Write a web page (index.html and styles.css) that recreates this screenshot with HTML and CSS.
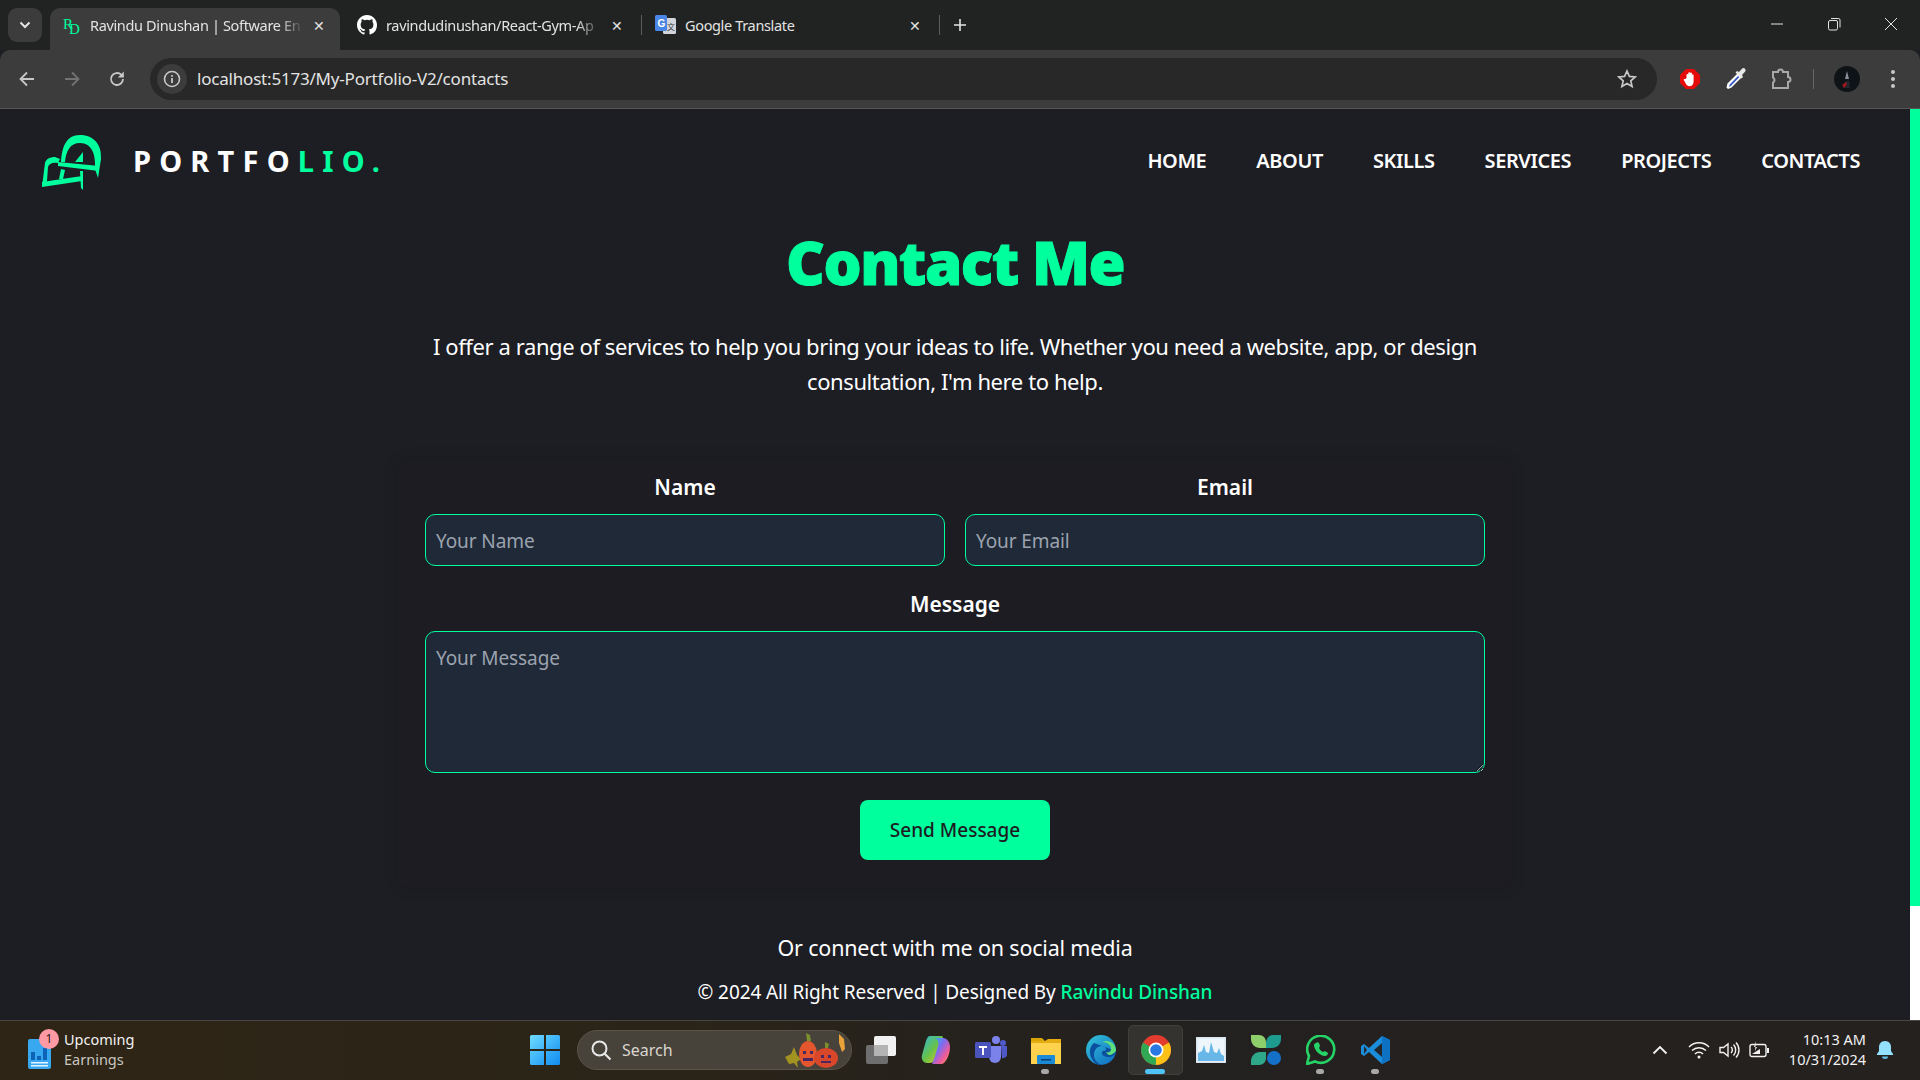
FILE: index.html
```html
<!DOCTYPE html>
<html lang="en">
 <head>
  <meta charset="utf-8"/>
  <title>Ravindu Dinushan | Software Engineer</title>
  <link rel="stylesheet" href="styles.css">
 </head>
 <body>
  <!-- browser tabs -->
  <div class="tabstrip">
   <button class="tab-search"><svg width="12" height="8" viewBox="0 0 12 8"><path d="M1.500 1.500 6 6l4.500-4.500" fill="none" stroke="#e3e3e3" stroke-width="2"/></svg></button>
   <div class="tab tab-active">
    <svg class="favicon" width="18" height="22" viewBox="0 0 18 22"><text x="0" y="15" class="fav-r">R</text><text x="6" y="20" class="fav-r">D</text></svg>
    <span class="tab-title">Ravindu Dinushan | Software En</span>
    <span class="tab-close">✕</span>
   </div>
   <div class="tab tab-gh">
    <svg class="favicon" width="20" height="20" viewBox="0 0 16 16"><path fill="#fff" d="M8 0C3.580 0 0 3.580 0 8c0 3.540 2.290 6.530 5.470 7.590.4.070.55-.17.55-.38v-1.340c-2.230.48-2.690-1.070-2.690-1.070-.36-.93-.89-1.170-.89-1.170-.73-.5.060-.49.060-.49.8.060 1.230.83 1.230.83.71 1.220 1.870.87 2.330.66.070-.52.28-.87.51-1.070-1.780-.2-3.640-.89-3.640-3.950 0-.87.31-1.590.82-2.150-.08-.2-.36-1.020.08-2.120 0 0 .67-.21 2.200.82a7.600 7.600 0 0 1 4 0c1.530-1.040 2.200-.82 2.200-.82.44 1.100.16 1.920.08 2.120.51.56.82 1.270.82 2.150 0 3.070-1.870 3.750-3.650 3.950.29.25.54.73.54 1.480v2.200c0 .21.15.46.55.38A8 8 0 0 0 16 8c0-4.420-3.580-8-8-8z"/></svg>
    <span class="tab-title">ravindudinushan/React-Gym-Ap</span>
    <span class="tab-close">✕</span>
   </div>
   <i class="tab-sep"></i>
   <div class="tab tab-plain">
    <svg class="favicon" width="21" height="21" viewBox="0 0 21 21"><rect x="8" y="3" width="13" height="16" rx="1.500" fill="#d2d6dc"/><rect x="0" y="0" width="12" height="16" rx="1.500" fill="#4a86e8"/><text x="2.500" y="12" class="fav-g">G</text><text x="12" y="15" class="fav-t">文</text></svg>
    <span class="tab-title">Google Translate</span>
    <span class="tab-close">✕</span>
   </div>
   <i class="tab-sep"></i>
   <svg class="new-tab" width="14" height="14" viewBox="0 0 14 14"><path d="M7 1v12M1 7h12" stroke="#e3e3e3" stroke-width="1.600"/></svg>
   <div class="window-btns">
    <svg width="14" height="14" viewBox="0 0 14 14"><path d="M1 7h12" stroke="#e3e3e3" stroke-width="1"/></svg>
    <svg width="14" height="14" viewBox="0 0 14 14"><rect x="1.500" y="3.500" width="9" height="9.500" rx="1.500" fill="none" stroke="#e3e3e3"/><path d="M4 1.500h7.500a1.500 1.500 0 0 1 1.500 1.500v7.500" fill="none" stroke="#e3e3e3"/></svg>
    <svg width="14" height="14" viewBox="0 0 14 14"><path d="M1 1l12 12M13 1 1 13" stroke="#e3e3e3" stroke-width="1"/></svg>
   </div>
  </div>

  <!-- address bar -->
  <div class="toolbar">
   <svg class="tool-btn" width="18" height="18" viewBox="0 0 18 18"><path d="M16 9H3M9 2.500 2.500 9 9 15.500" fill="none" stroke="#c7c7c7" stroke-width="1.800"/></svg>
   <svg class="tool-btn" width="18" height="18" viewBox="0 0 18 18"><path d="M2 9h13M9 2.500 15.500 9 9 15.500" fill="none" stroke="#737373" stroke-width="1.800"/></svg>
   <svg class="tool-btn" width="18" height="18" viewBox="0 0 18 18"><path d="M15 9a6 6 0 1 1-1.800-4.300L15 6.500" fill="none" stroke="#c7c7c7" stroke-width="1.800"/><path d="M15.800 1.500v6h-6z" fill="#c7c7c7"/></svg>
   <div class="omnibox">
    <span class="site-info"><svg width="18" height="18" viewBox="0 0 18 18"><circle cx="9" cy="9" r="7.500" fill="none" stroke="#c7c7c7" stroke-width="1.600"/><path d="M9 8v5M9 5v1.800" stroke="#c7c7c7" stroke-width="1.800"/></svg></span>
    <span class="url">localhost:5173/My-Portfolio-V2/contacts</span>
    <svg class="star" width="20" height="20" viewBox="0 0 20 20"><path d="m10 2 2.400 5.400 5.800.6-4.400 3.900 1.300 5.700L10 14.600l-5.100 3 1.300-5.700L1.800 8l5.800-.6z" fill="none" stroke="#c7c7c7" stroke-width="1.700"/></svg>
   </div>
   <div class="ext-icons">
    <svg width="22" height="22" viewBox="0 0 22 22"><path d="M7 1h8l6 6v8l-6 6H7l-6-6V7z" fill="#e50b0b"/><path d="M7.500 10V6.500a1 1 0 0 1 1.800 0V10V4.800a1 1 0 0 1 1.800 0V10V5a1 1 0 0 1 1.800 0v5.500V7a1 1 0 0 1 1.700 0v6.500c0 3-1.800 4.800-4 4.800-2 0-3-1-4-3l-1.800-3.300c-.4-.9.800-1.500 1.300-.8z" fill="#fff"/></svg>
    <svg width="24" height="24" viewBox="0 0 24 24"><path d="m4 22-1.500-1.500 1-4L14 6l4 4L7.500 20.500z" fill="#fff"/><path d="m5 20 .7-2.600L14 9l1.300 1.300L7 18.700z" fill="#3557c5"/><path d="m13 4 2 1 3-3.200a2 2 0 0 1 3 3L18 8l1 2-1.500 1.500-6-6z" fill="#e8e8e8"/></svg>
    <svg width="22" height="22" viewBox="0 0 22 22"><path d="M2 4h5a2.500 2.500 0 0 1 5 0h5v5a2.500 2.500 0 0 1 0 5v6H2v-5.500a2.800 2.800 0 0 0 0-5z" fill="none" stroke="#a8a8a8" stroke-width="2"/></svg>
   </div>
   <i class="tool-sep"></i>
   <span class="avatar"><svg width="26" height="26" viewBox="0 0 26 26"><circle cx="13" cy="13" r="13" fill="#0d1317"/><path d="M11 13l2-8 2 8z" fill="#8a8f98"/><path d="M9 22l3-7h3l1 7z" fill="#23262c"/><path d="M8 19l4-3 1 2-3 4z" fill="#a11620"/></svg></span>
   <svg class="menu-dots" width="6" height="20" viewBox="0 0 6 20"><circle cx="3" cy="3" r="2" fill="#c7c7c7"/><circle cx="3" cy="10" r="2" fill="#c7c7c7"/><circle cx="3" cy="17" r="2" fill="#c7c7c7"/></svg>
  </div>

  <!-- the page itself -->
  <div class="viewport">
   <div class="page">
    <header class="site-header">
     <div class="brand">
      <svg class="logo" width="62" height="62" viewBox="20 14 62 62" fill="#00ff9d">
       <path d="M41 43C42 28 46 16 60 16c14 0 22 10 21 24l-3 19-3-9c1-14-3-26-15-26-10 0-14 8-15 19z"/>
       <path d="M38 43l41 4v5l-41-5z"/>
       <path d="M22 68l3-24c1-4 5-6 10-6l5 2-2 4c-6-1-9 1-10 4l-1 14z"/>
       <path d="M22 63l40-6v5l-40 6zM60 52h3v19l-2-2zM41 50l4 1-2 9h-4z"/>
       <path d="M55 43l8-10v10z"/>
      </svg>
      <span class="brand-name">PORTFO<span class="green">LIO.</span></span>
     </div>
     <nav class="site-nav">
      <a href="#">HOME</a>
      <a href="#">ABOUT</a>
      <a href="#">SKILLS</a>
      <a href="#">SERVICES</a>
      <a href="#">PROJECTS</a>
      <a href="#">CONTACTS</a>
     </nav>
    </header>

    <main class="contact">
     <h1>Contact Me</h1>
     <p class="intro">I offer a range of services to help you bring your ideas to life. Whether you need a website, app, or design consultation, I'm here to help.</p>
     <form class="contact-form">
      <div class="form-row">
       <label class="field">Name<input type="text" placeholder="Your Name"/></label>
       <label class="field">Email<input type="text" placeholder="Your Email"/></label>
      </div>
      <label class="field field-message">Message<textarea placeholder="Your Message"></textarea></label>
      <button class="send-btn" type="button">Send Message</button>
     </form>
     <p class="social">Or connect with me on social media</p>
     <p class="copyright">© 2024 All Right Reserved | Designed By <a href="#">Ravindu Dinshan</a></p>
    </main>
   </div>
   <div class="scrollbar"><div class="scroll-thumb"></div></div>
  </div>

  <!-- windows taskbar -->
  <div class="taskbar">
   <div class="widget">
    <span class="widget-icon">
     <svg width="24" height="30" viewBox="0 0 24 30"><rect width="23" height="30" rx="2" fill="#38a8f0"/><path d="M3 21v-8h4v8zM9 21v-4h4v4zM15 21V9h4v12z" fill="#0d63b8"/><path d="M3 23h17v1.500H3zM3 26h17v1.500H3z" fill="#e6f4ff"/></svg>
     <b class="badge">1</b>
    </span>
    <span class="widget-text"><span>Upcoming</span><span class="dim">Earnings</span></span>
   </div>
   <div class="task-center">
    <svg class="start" width="30" height="30" viewBox="0 0 30 30"><defs><linearGradient id="win" x1="0" y1="0" x2="1" y2="1"><stop offset="0" stop-color="#6fdcff"/><stop offset="1" stop-color="#0f8bf0"/></linearGradient></defs><path d="M0 1.500A1.500 1.500 0 0 1 1.500 0H14v14H0zM16 0h12.500A1.500 1.500 0 0 1 30 1.500V14H16zM0 16h14v14H1.500A1.500 1.500 0 0 1 0 28.500zM16 16h14v12.500a1.500 1.500 0 0 1-1.500 1.500H16z" fill="url(#win)"/></svg>
    <div class="search-pill">
     <svg width="22" height="22" viewBox="0 0 22 22"><circle cx="9.500" cy="9.500" r="7" fill="none" stroke="#e8e8e8" stroke-width="2"/><path d="m14.500 14.500 6 6" stroke="#e8e8e8" stroke-width="2.200"/></svg>
     <span>Search</span>
     <svg class="pumpkins" width="62" height="40" viewBox="0 0 62 40"><path d="M0 27l6-3 3-7 3 8 4 4-4 3 1 6-4-5-5 1z" fill="#a29320"/><ellipse cx="23" cy="24" rx="9" ry="13" fill="#e4572e"/><path d="M22 11l-1-8 4 2 1 6z" fill="#7c8f2e"/><ellipse cx="41" cy="28" rx="12" ry="10" fill="#d9472b"/><path d="M40 18l0-6 4 2-1 4z" fill="#7c8f2e"/><path d="M18 21h3v3h-3zM25 21h3v3h-3zM18 28h10v3H18zM36 25h3v3h-3zM43 25h3v3h-3zM36 31h10v2H36z" fill="#4a2760"/><path d="M54 4l5 5 1 10-3 3-3-9z" fill="#e9a23a"/></svg>
    </div>
    <div class="task-apps">
     <span class="app"><svg width="30" height="28" viewBox="0 0 30 28"><rect x="0" y="9" width="22" height="19" rx="2" fill="#6e6e6e"/><rect x="8" y="0" width="22" height="20" rx="2" fill="#f1f1f1"/><rect x="8" y="9" width="14" height="11" fill="#b4b4b4"/></svg></span>
     <span class="app"><svg width="30" height="30" viewBox="0 0 30 30"><defs><linearGradient id="cop" x1="0" y1="0" x2="1" y2="1"><stop offset="0" stop-color="#2bb6f0"/><stop offset=".4" stop-color="#7d6cf0"/><stop offset=".7" stop-color="#f05a9a"/><stop offset="1" stop-color="#f7a13a"/></linearGradient><linearGradient id="cop2" x1="0" y1="0" x2="1" y2="1"><stop offset="0" stop-color="#2fb8e0"/><stop offset=".5" stop-color="#66c24a"/><stop offset="1" stop-color="#f2c522"/></linearGradient></defs><path d="M9 1h11c4 0 1 3-1 9l-4 12c-1 3-3 6-6 6H6C2 28 0 24 1 20l4-14C6 3 7 1 9 1z" fill="url(#cop2)"/><path d="M14 3h8c4 0 7 4 7 9 0 7-3 13-6 16-1 1-3 1-4 1h-7c-2 0 1-4 2-8l3-10c1-4 0-6-3-8z" fill="url(#cop)"/></svg></span>
     <span class="app"><svg width="32" height="28" viewBox="0 0 32 28"><circle cx="21" cy="4" r="4" fill="#7b83eb"/><circle cx="28" cy="7" r="3" fill="#5059c9"/><path d="M14 10h12v11a6 6 0 0 1-12 0z" fill="#7b83eb"/><path d="M26 10h6v9a4 4 0 0 1-5 3z" fill="#5059c9"/><rect y="6" width="16" height="16" rx="1.500" fill="#4b53bc"/><path d="M4 10h8v2H9v7H7v-7H4z" fill="#fff"/></svg></span>
     <span class="app"><svg width="30" height="28" viewBox="0 0 30 28"><path d="M0 2h11l3 3h-14z" fill="#d9a406"/><path d="M0 5h30v23H0z" fill="#ffd24d"/><path d="M0 5h14l3-2h13v4H0z" fill="#e6ad12"/><rect x="6" y="19" width="18" height="9" rx="1" fill="#1b8bd8"/><rect x="10" y="23" width="10" height="1.500" fill="#0b3e73"/></svg></span>
     <span class="app"><svg width="30" height="30" viewBox="0 0 30 30"><defs><linearGradient id="edg" x1="0" y1="0" x2="1" y2="1"><stop offset="0" stop-color="#35c6d9"/><stop offset="1" stop-color="#0d68c0"/></linearGradient></defs><circle cx="15" cy="15" r="15" fill="url(#edg)"/><path d="M30 16c0 4-4 6-8 6-3 0-5-1-6-3-1-3 2-4 3-3 2-1 1-5-3-5-5 0-8 4-8 9 0 6 5 10 10 10-3 1-9 0-12-6-3-5-3-12 2-16" fill="#0b4f9e"/><path d="M30 16c0-7-6-12-14-9 5 0 9 3 9 7 0 3-3 4-5 3 1 3 5 5 10-1z" fill="#5fe07a"/></svg></span>
     <span class="app app-active"><svg width="30" height="30" viewBox="0 0 30 30"><circle cx="15" cy="15" r="15" fill="#e33b2e"/><path d="M15 15 27.990 7.500A15 15 0 0 1 15 30z" fill="#fbc116"/><path d="M15 15 15 30A15 15 0 0 1 2.010 7.500z" fill="#31a853"/><circle cx="15" cy="15" r="7.500" fill="#fff"/><circle cx="15" cy="15" r="5.800" fill="#2a78e4"/></svg></span>
     <span class="app"><svg width="30" height="26" viewBox="0 0 30 26"><rect width="30" height="26" fill="#d8e4ee"/><rect x="1.500" y="1.500" width="27" height="23" fill="#eef6fb"/><path d="M2 24v-8l4-2 2-6 2 7 3 1 2-11 3 10 3 1 2-5 2 6 3 2v5z" fill="#69b7e8"/></svg></span>
     <span class="app"><svg width="30" height="30" viewBox="0 0 30 30"><path d="M0 0h8c5 0 7 4 7 8v5H9c-5 0-9-4-9-9z" fill="#8ecf6b"/><path d="M30 0h-8c-4 0-7 4-7 8v5h6c5 0 9-4 9-9z" fill="#1d9c8f"/><path d="M0 30h8c4 0 7-3 7-7v-6H9c-5 0-9 4-9 9z" fill="#2fa88a"/><circle cx="23" cy="23" r="7" fill="#1570c8"/></svg></span>
     <span class="app"><svg width="30" height="30" viewBox="0 0 30 30"><path d="M1 29l2-8A13.500 13.500 0 1 1 9 26.500z" fill="none" stroke="#25d366" stroke-width="2.600"/><path d="M10 8c1-1 2-1 3 0l1 3-1 2c1 2 2 3 4 4l2-1 3 2c0 1-1 3-3 3-5 0-11-6-11-11 0-1 1-2 2-2z" fill="#25d366"/></svg></span>
     <span class="app"><svg width="30" height="30" viewBox="0 0 30 30"><path d="M21 1l8 4v20l-8 4L8 17l-5 4-3-2v-8l3-2 5 4z" fill="#1a8ddb"/><path d="M21 1l8 4v20l-8 4z" fill="#0e72c4"/><path d="M21 8v14l-8-7z" fill="#22272e"/><path d="M3 11l3 4-3 4z" fill="#22272e"/></svg></span>
     <i class="pin pin-explorer"></i>
     <i class="pin pin-chrome"></i>
     <i class="pin pin-whatsapp"></i>
     <i class="pin pin-code"></i>
    </div>
   </div>
   <div class="tray">
    <svg width="16" height="10" viewBox="0 0 16 10"><path d="M1.500 8.500 8 2l6.500 6.500" fill="none" stroke="#f2f2f2" stroke-width="1.800"/></svg>
    <svg class="tray-wifi" width="22" height="18" viewBox="0 0 22 18"><path d="M1 6a14 14 0 0 1 20 0M4 9.500a10 10 0 0 1 14 0M7 13a5.500 5.500 0 0 1 8 0" fill="none" stroke="#f2f2f2" stroke-width="1.500"/><circle cx="11" cy="16" r="1.500" fill="#f2f2f2"/></svg>
    <svg width="21" height="18" viewBox="0 0 21 18"><path d="M1 6.500h3.500L9 3v12l-4.500-3.500H1z" fill="none" stroke="#f2f2f2" stroke-width="1.400"/><path d="M12 6a4 4 0 0 1 0 6M14.500 3.500a8 8 0 0 1 0 11M17 1.500a11 11 0 0 1 0 15" fill="none" stroke="#f2f2f2" stroke-width="1.400"/></svg>
    <svg width="21" height="18" viewBox="0 0 21 18"><rect x="1" y="3.500" width="16" height="12" rx="2" fill="none" stroke="#f2f2f2" stroke-width="1.400"/><path d="M18 7h2v5h-2z" fill="#f2f2f2"/><path d="M3 13l8-5v5zM7 0l-2 6h3L6 10" fill="#f2f2f2"/></svg>
    <div class="clock"><span>10:13 AM</span><span>10/31/2024</span></div>
    <svg class="bell" width="18" height="20" viewBox="0 0 18 20"><path d="M9 1c4 0 6 3 6 6v4l2 3c.3.6 0 1-.6 1H1.600c-.6 0-.9-.4-.6-1l2-3V7c0-3 2-6 6-6z" fill="#93e1ff"/><path d="M6 16.500h6a3 2.500 0 0 1-6 0z" fill="#5dbde6"/></svg>
   </div>
  </div>
 </body>
</html>
```
FILE: styles.css
```css
:root {
  --green: #00ff9d;
  --page: #1d1d24;
  --card: #1c1c22;
  --chrome: #3c3c3c;
  --strip: #202322;
  --font: "Noto Sans", "Open Sans", sans-serif;
}

* {
  margin: 0;
  padding: 0;
  box-sizing: border-box;
}

html, body {
  height: 100%;
  overflow: hidden;
}

body {
  display: flex;
  flex-direction: column;
  background: var(--page);
  color: #fff;
  font-family: var(--font);
}

/* Tab strip */
.tabstrip {
  height: 50px;
  flex: none;
  display: flex;
  align-items: flex-start;
  background: var(--strip);
  color: #e3e3e3;
  font-size: 14.5px;
  letter-spacing: -0.35px;
}

.tab-search {
  width: 34px;
  height: 34px;
  margin: 8px 8px 0 8px;
  border: none;
  border-radius: 9px;
  background: #3c3c3c;
  display: flex;
  align-items: center;
  justify-content: center;
}

.tab {
  width: 290px;
  height: 42px;
  margin-top: 8px;
  padding: 0 14px 8px 13px;
  display: flex;
  align-items: center;
  flex: none;
}

.tab-active {
  background: var(--chrome);
  border-radius: 10px 10px 0 0;
  margin-right: 4px;
}

.tab-gh {
  width: 294px;
  margin-right: 3px;
}

.favicon {
  flex: none;
  margin-right: 9px;
}

.fav-r {
  font: 15px "Liberation Serif", serif;
  fill: #00ff9d;
}

.fav-g {
  font: bold 10px "Liberation Sans", sans-serif;
  fill: #fff;
}

.fav-t {
  font: 8px "Noto Sans CJK SC", sans-serif;
  fill: #3c4043;
}

.tab-title {
  flex: 1;
  min-width: 0;
  white-space: nowrap;
  -webkit-mask-image: linear-gradient(to right, #000 88%, transparent 100%);
  mask-image: linear-gradient(to right, #000 88%, transparent 100%);
}

.tab-plain .tab-title {
  -webkit-mask-image: none;
  mask-image: none;
}

.tab-close {
  font-size: 14px;
  margin-left: 8px;
  width: 14px;
  text-align: center;
}

.tab-plain {
  width: 294px;
  margin-right: 3px;
}

.tab-sep {
  width: 1px;
  height: 20px;
  margin-top: 15px;
  background: #5a5d5c;
  flex: none;
}

.new-tab {
  margin: 18px 0 0 13px;
  flex: none;
}

.window-btns {
  margin-left: auto;
  margin-right: 22px;
  margin-top: 17px;
  display: flex;
  gap: 43px;
}

/* Address bar */
.toolbar {
  height: 59px;
  flex: none;
  display: flex;
  align-items: center;
  background: var(--chrome);
  border-bottom: 1px solid #555;
  border-radius: 10px 10px 0 0;
  padding: 0 0 1px 18px;
}

.tool-btn {
  flex: none;
  margin-right: 27px;
}

.omnibox {
  width: 1507px;
  height: 42px;
  margin-left: -3px;
  padding: 0 20px 0 7px;
  border-radius: 21px;
  background: #282828;
  display: flex;
  align-items: center;
  flex: none;
}

.site-info {
  width: 30px;
  height: 30px;
  border-radius: 50%;
  background: #3c3c3c;
  display: flex;
  align-items: center;
  justify-content: center;
}

.url {
  margin-left: 10px;
  font-size: 17px;
  letter-spacing: -0.2px;
  color: #e3e3e3;
}

.star {
  margin-left: auto;
}

.ext-icons {
  display: flex;
  align-items: center;
  gap: 23px;
  margin-left: 22px;
}

.tool-sep {
  width: 1px;
  height: 20px;
  background: #666;
  margin: 0 20px 0 20px;
}

.avatar {
  display: flex;
}

.menu-dots {
  margin-left: 30px;
}

/* Page */
.viewport {
  height: 911px;
  flex: none;
  display: flex;
  overflow: hidden;
}

.page {
  flex: 1;
  min-width: 0;
}

.scrollbar {
  width: 10px;
  flex: none;
  background: #fff;
}

.scroll-thumb {
  height: 797px;
  background: var(--green);
}

.site-header {
  height: 104px;
  padding: 0 50px 0 40px;
  display: flex;
  align-items: center;
  justify-content: space-between;
}

.brand {
  display: flex;
  align-items: center;
  gap: 31px;
}

.logo {
  margin-top: 6px;
}

.brand-name {
  font-size: 29px;
  font-weight: 700;
  letter-spacing: 8.2px;
  margin-bottom: 2px;
}

.green {
  color: var(--green);
}

.site-nav {
  display: flex;
  gap: 50px;
  margin-bottom: 2px;
}

.site-nav a {
  color: #fff;
  text-decoration: none;
  font-size: 20px;
  font-weight: 600;
  letter-spacing: -0.42px;
}

.contact {
  display: flex;
  flex-direction: column;
  align-items: center;
  text-align: center;
}

.contact h1 {
  margin-top: 19px;
  font-size: 60px;
  line-height: 60px;
  font-weight: 900;
  letter-spacing: -1.5px;
  -webkit-text-stroke: 1px var(--green);
  color: var(--green);
}

.intro {
  width: 1060px;
  margin-top: 37px;
  font-size: 22px;
  letter-spacing: -0.41px;
  line-height: 35px;
}

.contact-form {
  width: 1114px;
  margin-top: 61px;
  padding: 13px 27px 28px;
  background: var(--card);
  box-shadow: 0 0 16px rgba(0, 0, 0, 0.12);
  border-radius: 10px;
  display: flex;
  flex-direction: column;
  align-items: center;
}

.form-row {
  width: 100%;
  display: flex;
  gap: 20px;
}

.field {
  flex: 1;
  display: flex;
  flex-direction: column;
  gap: 13px;
  font-size: 21px;
  line-height: 28px;
  font-weight: 600;
}

.field-message {
  width: 100%;
  margin-top: 24px;
}

.field input, .field textarea {
  width: 100%;
  padding: 0 10px;
  background: #1f2937;
  border: 1px solid var(--green);
  border-radius: 10px;
  color: #fff;
  font-family: var(--font);
  font-size: 19px;
  letter-spacing: -0.1px;
  outline: none;
}

.field input {
  height: 52px;
  padding-top: 2px;
}

.field textarea {
  display: block;
  height: 142px;
  padding-top: 13px;
}

.field input::placeholder, .field textarea::placeholder {
  color: #9ca3af;
  opacity: 1;
}

.send-btn {
  width: 190px;
  height: 60px;
  margin-top: 27px;
  border: none;
  border-radius: 8px;
  background: var(--green);
  color: #1c1c22;
  font-family: var(--font);
  font-size: 19px;
  font-weight: 500;
}

.social {
  margin-top: 44px;
  font-size: 21.5px;
  letter-spacing: -0.18px;
  line-height: 32px;
}

.copyright {
  margin-top: 12px;
  font-size: 19px;
  letter-spacing: -0.1px;
  line-height: 32px;
}

.copyright a {
  color: var(--green);
  text-decoration: none;
  font-weight: 500;
}

/* Taskbar */
.taskbar {
  height: 60px;
  flex: none;
  display: flex;
  align-items: center;
  padding-bottom: 1px;
  border-top: 1px solid #4a4540;
  background: linear-gradient(to right, #2f2516 0%, #2a2418 35%, #232120 60%, #25211e 100%);
  color: #f2f2f2;
  font-size: 14.5px;
}

.widget {
  width: 530px;
  flex: none;
  padding-left: 28px;
  display: flex;
  align-items: center;
  gap: 12px;
}

.widget-icon {
  position: relative;
  display: flex;
  margin-top: 8px;
}

.badge {
  position: absolute;
  top: -10px;
  right: -7px;
  width: 20px;
  height: 20px;
  border-radius: 50%;
  background: #ff99a4;
  color: #2a1a1a;
  font-size: 12px;
  font-weight: 400;
  line-height: 20px;
  text-align: center;
}

.widget-text {
  display: flex;
  flex-direction: column;
  line-height: 20px;
  margin-bottom: 3px;
}

.dim {
  color: #c9c6c0;
}

.task-center {
  display: flex;
  align-items: center;
  flex: none;
}

.start {
  margin-right: 17px;
}

.search-pill {
  width: 275px;
  height: 40px;
  padding-left: 12px;
  border: 1px solid #5a5448;
  border-radius: 20px;
  background: #47423a;
  display: flex;
  align-items: center;
  gap: 10px;
  font-size: 16px;
  color: #d9d6d0;
  overflow: hidden;
}

.pumpkins {
  margin-left: auto;
  margin-right: 4px;
}

.task-apps {
  position: relative;
  display: flex;
  margin-left: 1px;
}

.app {
  width: 55px;
  height: 50px;
  display: flex;
  align-items: center;
  justify-content: center;
}

.app-active {
  background: #35332f;
  border: 1px solid #413f3b;
  border-radius: 5px;
}

.pin {
  position: absolute;
  bottom: 1px;
  width: 8px;
  height: 5px;
  border-radius: 3px;
  background: #a8a8a8;
}

.pin-explorer { left: 188px; }
.pin-whatsapp { left: 463px; }
.pin-code { left: 518px; }

.pin-chrome {
  left: 292px;
  width: 20px;
  background: #4fc3f7;
}

.tray {
  margin-left: auto;
  padding-right: 26px;
  display: flex;
  align-items: center;
  gap: 9px;
}

.tray-wifi {
  margin-left: 11px;
}

.clock {
  margin-left: 10px;
  margin-bottom: 3px;
  display: flex;
  flex-direction: column;
  align-items: flex-end;
  line-height: 20px;
}

.bell {
  margin-left: 1px;
}
```
